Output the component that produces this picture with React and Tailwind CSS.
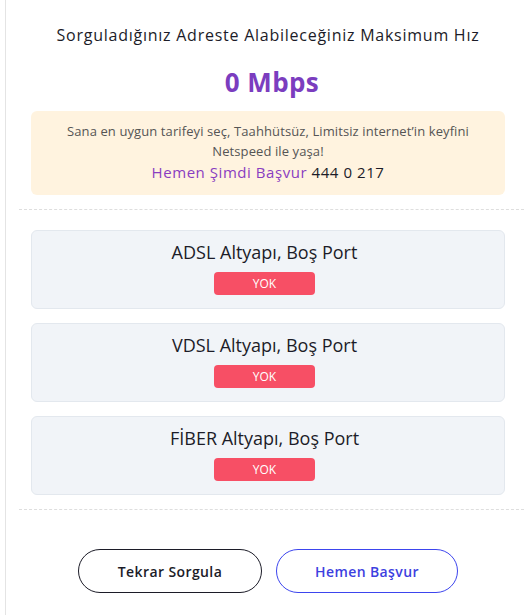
const cards = ['ADSL Altyapı, Boş Port', 'VDSL Altyapı, Boş Port', 'FİBER Altyapı, Boş Port']

export default function App() {
    return (
        <div className="min-h-screen bg-white pl-[5px] font-['Open_Sans',sans-serif]">
            <div className="min-h-[615px] border-l border-[#e4e4e4] pl-[13px]">
                <div className="w-[498px] pt-[24px]">
                    <h2 className="text-center text-[16px] leading-[22px] tracking-[0.75px] text-[#1c1c28]">
                        Sorguladığınız Adreste Alabileceğiniz Maksimum Hız
                    </h2>
                    <div className="mt-[18px] pl-[8px] text-center text-[26px] font-bold leading-[36px] tracking-[0.4px] text-[#7b3dbf]">
                        0 Mbps
                    </div>

                    <div className="mx-[12px] mt-[11px] rounded-md bg-[#fff3df] px-[28px] pt-[10px] pb-[12px] text-center">
                        <p className="text-[13px] leading-[20px] tracking-[0.1px] text-[#555]">
                            Sana en uygun tarifeyi seç, Taahhütsüz, Limitsiz internet’in keyfini Netspeed ile yaşa!
                        </p>
                        <p className="text-[15px] leading-[22px] tracking-[0.55px]">
                            <span className="text-[#8a3dc1]">Hemen Şimdi Başvur</span>{' '}
                            <span className="text-[#1c1c28]">444 0 217</span>
                        </p>
                    </div>

                    <div className="mt-[14px] -mr-[7px] border-t border-dashed border-[#dedede]" />

                    <div className="mx-[12px] mt-[20px] flex flex-col gap-[14px]">
                        {cards.map((c) => (
                            <div key={c} className="flex h-[79px] flex-col items-center rounded-md border border-[#e3e8ee] bg-[#f1f4f8] pt-[8px] pr-[7px]">
                                <div className="text-[18px] leading-[26px] text-[#1c1c28]">{c}</div>
                                <div className="mt-[7px] flex h-[23px] w-[101px] items-center justify-center rounded-[4px] bg-[#f74f65] text-[12px] text-white">
                                    YOK
                                </div>
                            </div>
                        ))}
                    </div>

                    <div className="mt-[14px] -mr-[7px] border-t border-dashed border-[#dedede]" />

                    <div className="mt-[39px] flex justify-center gap-[14px]">
                        <button className="h-[44px] w-[184px] rounded-full border border-[#1c1c28] text-[14px] font-semibold tracking-[0.4px] text-[#1c1c28]">
                            Tekrar Sorgula
                        </button>
                        <button className="h-[44px] w-[182px] rounded-full border border-[#3d45ee] text-[14px] font-semibold tracking-[0.4px] text-[#3d3fe0]">
                            Hemen Başvur
                        </button>
                    </div>
                </div>
            </div>
        </div>
    )
}
